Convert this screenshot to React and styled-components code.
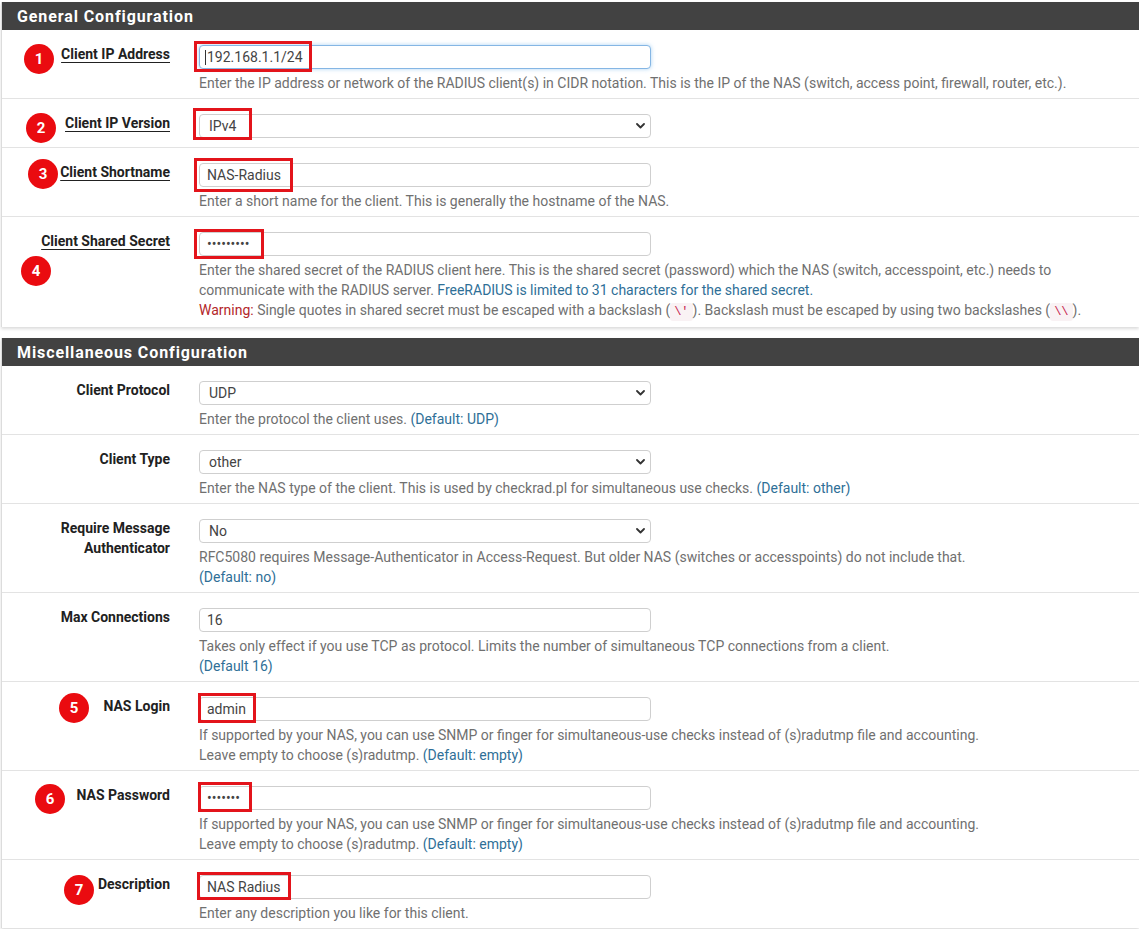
import React from 'react';
import styled, { createGlobalStyle, css } from 'styled-components';

const GlobalStyle = createGlobalStyle`
  html, body { margin: 0; padding: 0; background: #fff; }
  body {
    font-family: Roboto, "Liberation Sans", Arial, sans-serif;
    font-size: 14px;
    color: #212121;
  }
`;

const Page = styled.div`
  padding: 2px 0 0 1px;
`;

const Panel = styled.section`
  border-left: 1px solid #dcdcdc;
  background: #fff;
  box-shadow: 0 2px 3px rgba(0, 0, 0, 0.14);
  margin-bottom: 11px;
`;

const PanelHeading = styled.h2`
  margin: 0;
  height: 28px;
  display: flex;
  align-items: center;
  padding: 0 15px;
  background: #424242;
  color: #fff;
  font-size: 16px;
  font-weight: 700;
  letter-spacing: 0.9px;
`;

const Row = styled.div`
  position: relative;
  display: grid;
  grid-template-columns: 182px 1fr;
  border-bottom: 1px solid #e3e3e3;
  &:last-child { border-bottom: none; }
`;

const LabelCell = styled.div`
  padding: 14px 14px 0 0;
  text-align: right;
  font-weight: 700;
  font-size: 14px;
  line-height: 20px;
  color: #212121;
`;

const LabelText = styled.span`
  ${(p) => p.$required && css`
    text-decoration: underline;
    text-underline-offset: 3px;
    text-decoration-thickness: 1px;
  `}
`;

const FieldCell = styled.div`
  padding: 15px 0 ${(p) => (p.$hasHelp ? 5 : 9)}px 15px;
  min-width: 0;
`;

const Control = styled.div`
  position: relative;
  width: 452px;
`;

const TextInput = styled.input`
  box-sizing: border-box;
  display: block;
  width: 452px;
  height: 24px;
  padding: 0 7px;
  border: 1px solid #cfcfcf;
  border-radius: 4px;
  font-family: Roboto, "Liberation Sans", Arial, sans-serif;
  font-size: 14px;
  color: #444;
  background: #fff;
  outline: none;
  ${(p) => p.$focus && css`
    border-color: #85b6e4;
    box-shadow: 0 0 4px rgba(102, 175, 233, 0.55);
  `}
`;

const Caret = styled.span`
  position: absolute;
  left: 6px;
  top: 5px;
  width: 1px;
  height: 15px;
  background: #333;
  pointer-events: none;
`;

const Select = styled.select`
  box-sizing: border-box;
  display: block;
  width: 452px;
  height: 24px;
  padding: 0 24px 0 9px;
  border: 1px solid #cfcfcf;
  border-radius: 4px;
  font-family: Roboto, "Liberation Sans", Arial, sans-serif;
  font-size: 14px;
  color: #444;
  background: #fff;
  appearance: none;
  -webkit-appearance: none;
  outline: none;
`;

const Chevron = styled.svg`
  position: absolute;
  right: 6px;
  top: 9px;
  pointer-events: none;
`;

const Help = styled.div`
  margin-top: 4px;
  font-size: 14px;
  line-height: 20px;
  color: #707070;
  white-space: nowrap;
`;

const HelpLink = styled.span`
  color: #2f6f97;
`;

const Warn = styled.span`
  color: #b3262a;
`;

const Code = styled.code`
  font-family: "Liberation Mono", "DejaVu Sans Mono", monospace;
  font-size: 12px;
  color: #c7254e;
  background: #f9f2f4;
  padding: 2px 4px;
  border-radius: 3px;
`;

const Mark = styled.span`
  position: absolute;
  left: ${(p) => p.$x}px;
  top: ${(p) => p.$y}px;
  width: ${(p) => p.$w}px;
  height: ${(p) => p.$h}px;
  box-sizing: border-box;
  border: 3px solid #e3141b;
  pointer-events: none;
`;

const Badge = styled.span`
  position: absolute;
  left: ${(p) => p.$x}px;
  top: ${(p) => p.$y}px;
  width: 30px;
  height: 30px;
  border-radius: 50%;
  background: #ea0b10;
  color: #fff;
  font-family: Roboto, "Liberation Sans", Arial, sans-serif;
  font-weight: 700;
  font-size: 15px;
  display: flex;
  align-items: center;
  justify-content: center;
`;

const sections = [
  {
    title: 'General Configuration',
    rows: [
      {
        label: 'Client IP Address', required: true,
        badge: { n: 1, x: 22, y: 14 },
        control: { kind: 'text', value: '192.168.1.1/24', focus: true },
        mark: { x: -5, y: -4, w: 118, h: 31 },
        help: <>Enter the IP address or network of the RADIUS client(s) in CIDR notation. This is the IP of the NAS (switch, access point, firewall, router, etc.).</>,
      },
      {
        label: 'Client IP Version', required: true,
        badge: { n: 2, x: 24, y: 14 },
        control: { kind: 'select', value: 'IPv4', options: ['IPv4', 'IPv6'] },
        mark: { x: -6, y: -6, w: 59, h: 32 },
      },
      {
        label: 'Client Shortname', required: true,
        badge: { n: 3, x: 26, y: 11 },
        control: { kind: 'text', value: 'NAS-Radius' },
        mark: { x: -5, y: -5, w: 99, h: 34 },
        help: <>Enter a short name for the client. This is generally the hostname of the NAS.</>,
      },
      {
        label: 'Client Shared Secret', required: true,
        badge: { n: 4, x: 19, y: 39 },
        control: { kind: 'password', value: 'secret123' },
        mark: { x: -5, y: -3, w: 70, h: 30 },
        help: (
          <>
            Enter the shared secret of the RADIUS client here. This is the shared secret (password) which the NAS (switch, accesspoint, etc.) needs to
            <br />
            communicate with the RADIUS server. <HelpLink>FreeRADIUS is limited to 31 characters for the shared secret.</HelpLink>
            <br />
            <Warn>Warning:</Warn> Single quotes in shared secret must be escaped with a backslash (<Code>\'</Code>). Backslash must be escaped by using two backslashes (<Code>\\</Code>).
          </>
        ),
      },
    ],
  },
  {
    title: 'Miscellaneous Configuration',
    rows: [
      {
        label: 'Client Protocol',
        control: { kind: 'select', value: 'UDP', options: ['UDP', 'TCP'] },
        help: <>Enter the protocol the client uses. <HelpLink>(Default: UDP)</HelpLink></>,
      },
      {
        label: 'Client Type',
        control: { kind: 'select', value: 'other', options: ['other', 'cisco', 'livingston'] },
        help: <>Enter the NAS type of the client. This is used by checkrad.pl for simultaneous use checks. <HelpLink>(Default: other)</HelpLink></>,
      },
      {
        label: <>Require Message<br />Authenticator</>,
        control: { kind: 'select', value: 'No', options: ['No', 'Yes'] },
        help: (
          <>
            RFC5080 requires Message-Authenticator in Access-Request. But older NAS (switches or accesspoints) do not include that.
            <br />
            <HelpLink>(Default: no)</HelpLink>
          </>
        ),
      },
      {
        label: 'Max Connections',
        control: { kind: 'text', value: '16' },
        help: (
          <>
            Takes only effect if you use TCP as protocol. Limits the number of simultaneous TCP connections from a client.
            <br />
            <HelpLink>(Default 16)</HelpLink>
          </>
        ),
      },
      {
        label: 'NAS Login',
        badge: { n: 5, x: 57, y: 11 },
        control: { kind: 'text', value: 'admin' },
        mark: { x: -1, y: -4, w: 58, h: 30 },
        help: (
          <>
            If supported by your NAS, you can use SNMP or finger for simultaneous-use checks instead of (s)radutmp file and accounting.
            <br />
            Leave empty to choose (s)radutmp. <HelpLink>(Default: empty)</HelpLink>
          </>
        ),
      },
      {
        label: 'NAS Password',
        badge: { n: 6, x: 33, y: 13 },
        control: { kind: 'password', value: 'passwor' },
        mark: { x: -1, y: -4, w: 54, h: 30 },
        help: (
          <>
            If supported by your NAS, you can use SNMP or finger for simultaneous-use checks instead of (s)radutmp file and accounting.
            <br />
            Leave empty to choose (s)radutmp. <HelpLink>(Default: empty)</HelpLink>
          </>
        ),
      },
      {
        label: 'Description',
        badge: { n: 7, x: 62, y: 15 },
        control: { kind: 'text', value: 'NAS Radius' },
        mark: { x: -2, y: -3, w: 94, h: 28 },
        help: <>Enter any description you like for this client.</>,
      },
    ],
  },
];

function FieldControl({ control }) {
  if (control.kind === 'select') {
    return (
      <>
        <Select defaultValue={control.value}>
          {control.options.map((o) => (
            <option key={o} value={o}>{o}</option>
          ))}
        </Select>
        <Chevron width="9" height="6" viewBox="0 0 9 6">
          <path d="M1 1 L4.5 4.5 L8 1" fill="none" stroke="#333" strokeWidth="1.8" strokeLinecap="round" strokeLinejoin="round" />
        </Chevron>
      </>
    );
  }
  return (
    <>
      <TextInput
        type={control.kind === 'password' ? 'password' : 'text'}
        defaultValue={control.value}
        readOnly
        $focus={control.focus}
      />
      {control.focus && <Caret />}
    </>
  );
}

function FormRow({ row }) {
  return (
    <Row>
      {row.badge && <Badge $x={row.badge.x} $y={row.badge.y}>{row.badge.n}</Badge>}
      <LabelCell>
        <LabelText $required={row.required}>{row.label}</LabelText>
      </LabelCell>
      <FieldCell $hasHelp={!!row.help}>
        <Control>
          <FieldControl control={row.control} />
          {row.mark && <Mark $x={row.mark.x} $y={row.mark.y} $w={row.mark.w} $h={row.mark.h} />}
        </Control>
        {row.help && <Help>{row.help}</Help>}
      </FieldCell>
    </Row>
  );
}

export default function App() {
  return (
    <>
      <GlobalStyle />
      <Page>
        {sections.map((s) => (
          <Panel key={s.title}>
            <PanelHeading>{s.title}</PanelHeading>
            {s.rows.map((r, i) => (
              <FormRow key={i} row={r} />
            ))}
          </Panel>
        ))}
      </Page>
    </>
  );
}
